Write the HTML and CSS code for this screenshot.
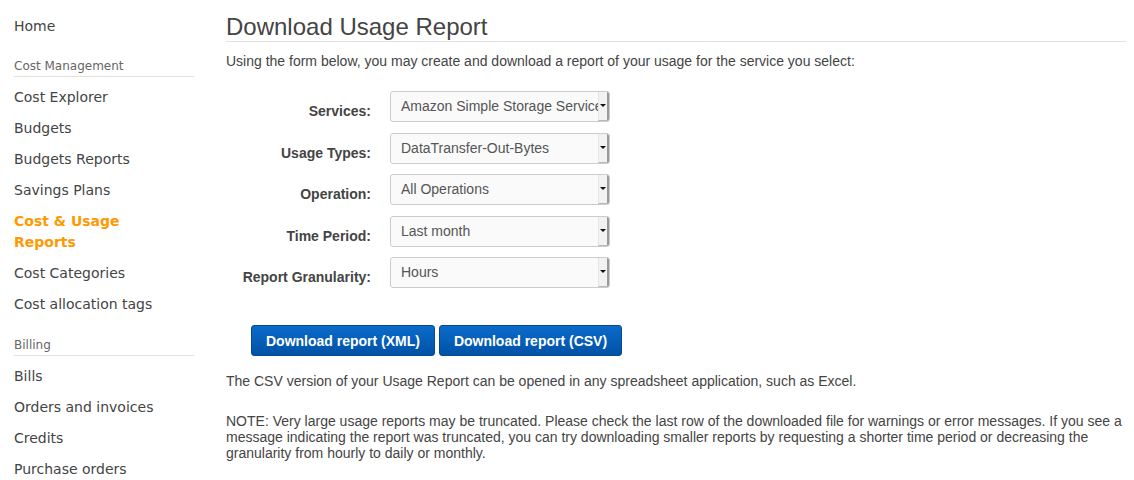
FILE: index.html
```html
<!DOCTYPE html>
<html>
<head>
<meta charset="utf-8">
<link rel="stylesheet" href="styles.css">
</head>
<body>
<div class="page">
  <nav class="sidebar">
    <a class="nav-item home">Home</a>
    <div class="nav-section">
      <div class="nav-heading">Cost Management</div>
      <a class="nav-item">Cost Explorer</a>
      <a class="nav-item">Budgets</a>
      <a class="nav-item">Budgets Reports</a>
      <a class="nav-item">Savings Plans</a>
      <a class="nav-item active">Cost &amp; Usage Reports</a>
      <a class="nav-item">Cost Categories</a>
      <a class="nav-item">Cost allocation tags</a>
    </div>
    <div class="nav-section">
      <div class="nav-heading">Billing</div>
      <a class="nav-item">Bills</a>
      <a class="nav-item">Orders and invoices</a>
      <a class="nav-item">Credits</a>
      <a class="nav-item">Purchase orders</a>
    </div>
  </nav>
  <main class="main">
    <h1 class="title">Download Usage Report</h1>
    <p class="intro">Using the form below, you may create and download a report of your usage for the service you select:</p>
    <div class="form">
      <label class="label">Services:</label>
      <div class="select"><span class="select-text">Amazon Simple Storage Service</span><span class="arrow"></span></div>
      <label class="label">Usage Types:</label>
      <div class="select"><span class="select-text">DataTransfer-Out-Bytes</span><span class="arrow"></span></div>
      <label class="label">Operation:</label>
      <div class="select"><span class="select-text">All Operations</span><span class="arrow"></span></div>
      <label class="label">Time Period:</label>
      <div class="select"><span class="select-text">Last month</span><span class="arrow"></span></div>
      <label class="label">Report Granularity:</label>
      <div class="select"><span class="select-text">Hours</span><span class="arrow"></span></div>
    </div>
    <div class="buttons">
      <button class="btn btn-xml">Download report (XML)</button>
      <button class="btn btn-csv">Download report (CSV)</button>
    </div>
    <p class="csv-note">The CSV version of your Usage Report can be opened in any spreadsheet application, such as Excel.</p>
    <p class="note">NOTE: Very large usage reports may be truncated. Please check the last row of the downloaded file for warnings or error messages. If you see a message indicating the report was truncated, you can try downloading smaller reports by requesting a shorter time period or decreasing the granularity from hourly to daily or monthly.</p>
  </main>
</div>
</body>
</html>
```

FILE: styles.css
```css
html, body {
  margin: 0;
  padding: 0;
  background: #fff;
}

.page {
  display: flex;
  align-items: flex-start;
}

.sidebar {
  width: 180px;
  margin-left: 14px;
  margin-right: 32px;
  padding-top: 16px;
  font-family: "DejaVu Sans", sans-serif;
  font-size: 14px;
  color: #444;
  display: flex;
  flex-direction: column;
}

.nav-item {
  display: block;
  line-height: 21px;
  margin-bottom: 10px;
  color: #444;
  cursor: pointer;
}

.nav-item.home {
  margin-bottom: 11px;
}

.nav-item.active {
  color: #ff9900;
  font-weight: bold;
  width: 120px;
}

.nav-section {
  display: flex;
  flex-direction: column;
  margin-top: 10px;
}

.nav-section + .nav-section {
  margin-top: 12px;
}

.nav-heading {
  font-size: 12px;
  line-height: 16px;
  color: #666;
  padding-bottom: 2px;
  border-bottom: 1px solid #e1e1e1;
  margin-bottom: 10px;
}

.main {
  flex: 1;
  margin-right: 8px;
  font-family: "Liberation Sans", Arial, sans-serif;
  font-size: 14px;
  color: #444;
}

.title {
  margin: 13px 0 0;
  font-size: 24px;
  font-weight: normal;
  line-height: 28px;
  color: #444;
  border-bottom: 1px solid #e1e1e1;
}

.intro {
  margin: 11px 0 0;
  line-height: 16px;
}

.form {
  display: grid;
  grid-template-columns: 145px 220px;
  column-gap: 19px;
  row-gap: 10.5px;
  margin-top: 22px;
}

.label {
  text-align: right;
  font-weight: bold;
  line-height: 16px;
  padding-top: 12px;
  color: #444;
}

.select {
  box-sizing: border-box;
  height: 31px;
  display: flex;
  align-items: stretch;
  border: 1px solid #ccc;
  border-radius: 3px;
  background: #fafafa;
  overflow: hidden;
}

.select-text {
  flex: 1;
  min-width: 0;
  white-space: nowrap;
  overflow: hidden;
  padding-left: 10px;
  line-height: 29px;
  color: #555;
}

.arrow {
  width: 8px;
  background: #f2f2f2;
  border-left: 1px solid #e4e4e4;
  border-right: 2px solid #9a9a9a;
  border-bottom: 1px solid #b8b8b8;
  display: flex;
  align-items: center;
  justify-content: center;
  padding-bottom: 1px;
}

.arrow::after {
  content: "";
  width: 0;
  height: 0;
  border-left: 3px solid transparent;
  border-right: 3px solid transparent;
  border-top: 3px solid #111;
}

.buttons {
  display: flex;
  gap: 4px;
  margin-top: 37px;
  margin-left: 25px;
}

.btn {
  box-sizing: border-box;
  height: 31px;
  padding: 0;
  white-space: nowrap;
  font-family: "Liberation Sans", Arial, sans-serif;
  font-size: 14px;
  font-weight: bold;
  color: #fff;
  background: linear-gradient(#0b6bca, #0052a6);
  border: 1px solid #064a8f;
  border-radius: 3px;
  cursor: pointer;
}

.btn-xml {
  width: 184px;
}

.btn-csv {
  width: 183px;
}

.csv-note {
  margin: 17px 0 0;
  line-height: 16px;
}

.note {
  margin: 24px 0 0;
  line-height: 16px;
}
```
